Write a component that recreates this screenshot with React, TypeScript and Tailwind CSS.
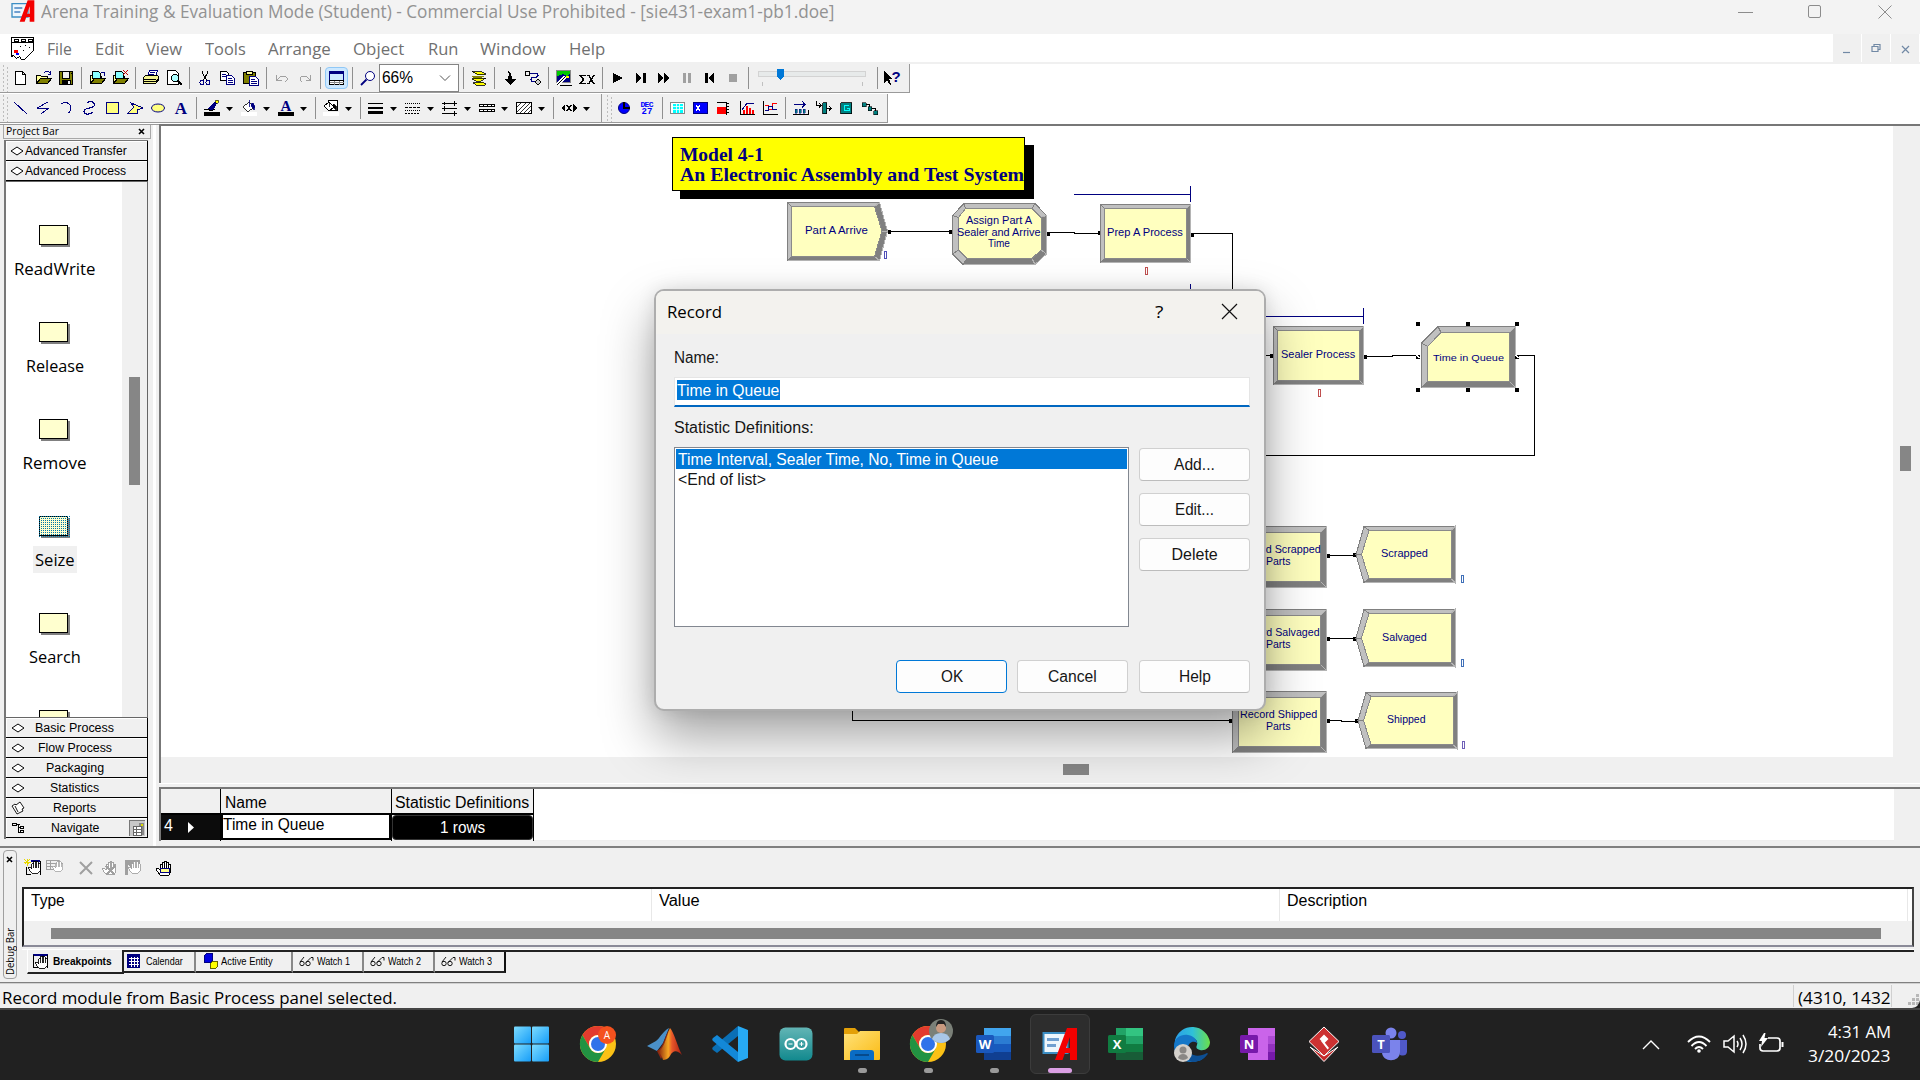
import React, { useLayoutEffect, useRef, useState } from "react";

const UI = "font-['Open_Sans','Noto_Sans',sans-serif]";
const ARIAL = "font-['Liberation_Sans',Arial,sans-serif]";
const TIMES = "font-['Liberation_Serif','Times_New_Roman',serif]";

/** One line of text, condensed or stretched to an exact width. */
function Fit({ w, children, className = "" }: { w: number; children: string; className?: string }) {
  const ref = useRef<HTMLSpanElement>(null);
  const [k, setK] = useState(1);
  useLayoutEffect(() => {
    if (ref.current) setK(w / ref.current.offsetWidth);
  }, [w, children]);
  return (
    <span className={"block shrink-0 " + className} style={{ width: w }}>
      <span ref={ref} className="inline-block origin-left whitespace-pre" style={{ transform: `scaleX(${k})` }}>
        {children}
      </span>
    </span>
  );
}

/* ---------- toolbars ---------- */

const N = "#000080";
const O = "#808000";

function Ic({ children, s = 20 }: { children: React.ReactNode; s?: number }) {
  return (
    <svg width={s} height={s} viewBox={`0 0 ${s} ${s}`} shapeRendering="crispEdges" fill="none" className="shrink-0">
      {children}
    </svg>
  );
}

const folder = (
  <>
    <path d="M3.5 15.5v-8h4l1 1h6v2" fill="#ffff99" stroke="#000" />
    <path d="M3.5 15.500l4-5h11l-4 5z" fill={O} stroke="#000" />
  </>
);

const icons: Record<string, React.ReactNode> = {
  new: <path d="M5.500 3.500h7l3 3v10h-10zM12.500 3.500v3h3" fill="#fff" stroke="#000" />,
  open: <>{folder}<path d="M10.500 5.500l2-2h3l2 2M17.500 2.500v4h-3" stroke={N} /></>,
  save: <><path d="M3.500 3.500h13v13h-13z" fill={O} stroke="#000" /><path d="M6 4h8v6H6z" fill="#efefef" /><path d="M6.500 4v6h7V4M15 5h1" stroke="#000" /><path d="M6 12h9v5H6z" fill="#000" /><path d="M12 13h2v3h-2z" fill="#efefef" /></>,
  import: <>{folder}<path d="M5.500 3.500h6l2 2v5h-8z" fill="#8ff" stroke="#000" /><path d="M14 4.500h3.500v3" stroke={N} /></>,
  unload: <>{folder}<path d="M5.500 3.500h6l2 2v5h-8z" fill="#8ff" stroke="#000" /><path d="M13 2l5 5M18 2l-5 5" stroke="#c00000" /></>,
  print: <><path d="M6.500 8.500l2-6h8l-2 6z" fill="#fff" stroke={N} /><path d="M2.500 9.500l2-2h12l1 1v4l-3 3h-12z" fill="#f4f490" stroke="#000" /><path d="M3 11.500h12M3 13.500h12l3-3" stroke="#000" /><path d="M9 4.500h5M8 6.500h5" stroke={N} /></>,
  preview: <><path d="M3.500 2.500h8l3 3v11h-11z" fill="#fff" stroke="#000" /><circle cx="11" cy="10" r="3.500" fill="#aff" stroke="#000" /><path d="M14 13l4 4" stroke="#000" strokeWidth="2" /></>,
  cut: <><path d="M7.500 3v2l4 7M12.500 3v2l-4 7" stroke="#000" /><circle cx="7" cy="14.500" r="2" stroke={N} /><circle cx="13" cy="14.500" r="2" stroke={N} /></>,
  copy: <><path d="M2.500 3.500h6l2 2v7h-8z" fill="#fff" stroke="#000" /><path d="M8.500 7.500h5l3 3v6h-8z" fill="#fff" stroke={N} /><path d="M4 6.500h4M4 8.500h4M10 10.500h4M10 12.500h5M10 14.500h5" stroke={N} /></>,
  paste: <><path d="M2.500 4.500h12v11h-12z" fill={O} stroke="#000" /><path d="M5.500 3.500h6v3h-6z" fill="#ff9" stroke="#000" /><path d="M8.500 8.500h6l3 3v6h-9z" fill="#fff" stroke={N} /><path d="M10 11.500h4M10 13.500h6M10 15.500h6" stroke={N} /></>,
  undo: <path d="M4.500 7v5h5M5 12l4-4h4l2 2v2l-2 2" stroke="#a0a0a0" />,
  redo: <path d="M15.500 7v5h-5M15 12l-4-4H7l-2 2v2l2 2" stroke="#a0a0a0" />,
  split: <><path d="M2.500 3.500h14v13h-14z" fill="#cfeaff" stroke={N} /><path d="M2 3h15v3H2z" fill={N} /><path d="M2.500 12.500h14v4h-14z" fill="#fff" stroke="#000" /><path d="M7.500 13v4M12.500 13v4M3 14.500h14" stroke="#888" /></>,
  zoom: <g shapeRendering="auto"><circle cx="12" cy="8" r="4.500" stroke={N} fill="#fff" /><path d="M8.500 11.500L3 17" stroke={N} strokeWidth="1.800" /></g>,
  layers: <><path d="M2.500 3.500h9l5 3h-9z" fill="#ff0" stroke="#000" strokeWidth=".8" /><path d="M16.500 7.500l-4 2.500h-8l-2-1.500 5-1z" fill={O} /><path d="M3 11l4-1h10l-5 3H7z" fill="#ff0" stroke="#000" strokeWidth=".8" /><path d="M4 15l3 2h9l1-1-4-2z" fill="#ff0" stroke="#000" strokeWidth=".8" /></>,
  arrow: <path d="M8 3l3 2 1 6h4l-6 6-6-6h4l1-5z" fill="#000" />,
  connect: <><path d="M2.500 3.500h4v4h-4z" stroke="#000" /><path d="M7 5.500h7l1 2-2 2H9l-1 2 1 2h4" stroke={N} /><path d="M15 11l3 3-3 3-3-3z" fill="#ccc" stroke="#000" /></>,
  pic: <><path d="M2.500 2.500h14v12h-14z" fill={N} stroke="#888" /><path d="M3 3h13v3l-3 2-4-2-6 2z" fill="#00c800" /><path d="M3 17l8-8" stroke="#fff" strokeWidth="3" /><path d="M3 17l8-8M6 17.500h12" stroke="#000" /><path d="M12 9h3" stroke="#ff0" strokeWidth="2" /></>,
  sigma: <path d="M9 7.500H3l3.500 4-3.500 4h6M10 7.500h2l4.500 8H18M18 7.500h-1.500l-4.500 8h-2" stroke="#000" strokeWidth="1.500" />,
  play: <path d="M5 5v10l10-5z" fill="#000" />,
  step: <path d="M5 5v10l6-5zM12 5h3v10h-3z" fill="#000" />,
  ff: <path d="M4 5v10l6-5zM10 5v10l6-5z" fill="#000" />,
  pause: <path d="M6 5h3v10H6zM11 5h3v10h-3z" fill="#a0a0a0" />,
  back: <path d="M5 5h3v10H5zM14 5v10l-6-5z" fill="#000" />,
  stop: <path d="M6 6h8v8H6z" fill="#a0a0a0" />,
  line: <path d="M4 4l13 12" stroke={N} />,
  zig: <path d="M15 4L4 10h12l-8 6" stroke={N} />,
  arc: <path d="M5 6c4-3 10-1 10 4 0 2-1 4-3 5" stroke={N} />,
  curve: <path d="M8 5c3-3 9-1 7 3-2 3-9 1-10 5 0 4 6 4 9 1" stroke={N} strokeWidth="1.200" />,
  rect: <path d="M4.500 4.500h12v11h-12z" fill="#ffff80" stroke={N} />,
  poly: <path d="M3 15l6-6-3-4 12 5-6 2v3z" fill="#ffff80" stroke={N} />,
  ellipse: <ellipse cx="10" cy="10" rx="6.500" ry="4" fill="#ffff80" stroke={N} shapeRendering="auto" />,
  letter: <text x="10" y="16" textAnchor="middle" fontSize="17" fontWeight="700" fontFamily="Liberation Serif" fill={N}>A</text>,
  pen: <><path d="M5 12l2-3 8-7 1 2-5 8z" fill={N} /><path d="M14 2l3 1-2 3-2-2z" fill="#ff0" stroke="#000" strokeWidth=".6" /><path d="M2 11.500h4l3 1 4-1" stroke="#000" /><path d="M2 14h16v4H2z" fill="#000" /></>,
  bucket: <><path d="M4 9l6-5 5 5-6 5z" fill="#fff" stroke="#000" strokeWidth=".8" /><path d="M10 2v7M13 5c3 1 3 4 2 7l-3-5z" fill={N} stroke={N} strokeWidth=".8" /><path d="M2 14h16v4H2z" fill="#fff" /></>,
  fontc: <><text x="10" y="13" textAnchor="middle" fontSize="15" fontWeight="700" fontFamily="Liberation Serif" fill={N}>A</text><path d="M2 14h16v4H2z" fill="#000" /></>,
  fillall: <><path d="M7.500 2.500h9v10h-9z" fill="#fff" stroke="#000" /><path d="M3 8l5-4 5 5-5 4z" fill="#fff" stroke="#000" /><path d="M8 4v5M12 6l3 2v4l-3-4z" fill="#000" stroke="#000" strokeWidth=".8" /><path d="M2 14h16v4H2z" fill="#fff" /></>,
  lines: <path d="M2 5h15v1H2zM2 9h15v2H2zM2 13h15v3H2z" fill="#000" />,
  dashes: <><path d="M2 5.500h15M2 12.500h15" stroke="#000" strokeDasharray="1 1" /><path d="M2 9.500h15" stroke="#000" strokeDasharray="3 1" /><path d="M2 15.500h15" stroke="#000" strokeDasharray="2 1" /></>,
  ends: <path d="M2 5.500h15M2 10.500h15M2 15.500h15M14.500 3v5M4.500 8v5M14.500 13v5M4.500 4v3" stroke="#000" />,
  patt: <><path d="M2 6h16v3H2zM2 11h16v3H2z" fill="#000" /><path d="M3 7.500h14M3 12.500h14" stroke="#fff" strokeDasharray="3 1" /></>,
  hatch: <><path d="M2.500 4.500h15v11h-15z" fill="#fff" stroke="#000" /><path d="M3 9l5-5M3 14l9-9M6 15l10-10M10 15l7-7M14 15l3-3" stroke="#000" strokeWidth=".8" /></>,
  arrowx: <><path d="M2 10l4-4v8zM18 10l-4-4v8z" fill="#000" /><path d="M7.500 7l5 6M12.500 7l-5 6" stroke="#000" strokeWidth="1.300" /></>,
  clock: <><circle cx="10" cy="10" r="5.500" fill="#00f" stroke={N} shapeRendering="auto" /><path d="M10 4v6h6" stroke="#000" strokeWidth="1.500" /></>,
  date: <><text x="10" y="9" textAnchor="middle" fontSize="8" textLength="13" fontWeight="700" fontFamily="Liberation Mono" fill="#00f">DEC</text><text x="10" y="16" textAnchor="middle" fontSize="9" fontWeight="700" fontFamily="Liberation Mono" fill="#00f">27</text></>,
  grid: <><path d="M2.500 4.500h14v11h-14z" fill="#fff" stroke="#888" /><path d="M5 6h10v9H5z" fill="#0ff" /><path d="M5 8.500h10M5 11.500h10M8.500 6v9M11.500 6v9" stroke="#fff" strokeWidth=".8" /></>,
  xvar: <><path d="M2.500 4.500h14v11h-14z" fill="#00f" stroke={N} /><path d="M5 7l4 6M9 7l-4 6" stroke="#fff" /></>,
  level: <><path d="M3 9h9v7H3z" fill="#f00" /><path d="M3 4.500h9M12.500 4v13M13 5.500h2M13 8.500h2M13 11.500h2M13 14.500h2" stroke="#000" /></>,
  hist: <><path d="M3.500 3v13.500h14" stroke="#000" /><path d="M6 12h2v4H6zM9 8h2v8H9zM12 10h2v6h-2zM15 12h2v4h-2z" fill="#f00" /><path d="M5 12l5-7h7" stroke={N} /></>,
  plot: <><path d="M3.500 3v13.500h14" stroke="#000" /><path d="M5 7.500h3v4h4v-6h5" stroke="#f00" /><path d="M5 12.500h3v-4h4v3h5" stroke={N} /></>,
  queue: <><path d="M2 16.500h16M17.500 12v4" stroke="#000" /><path d="M4 11h2v4H4zM8 11h2v4H8zM12 11h2v4h-2z" fill="#008080" stroke={N} strokeWidth=".5" /><path d="M3 6.500h11M11 3l3 3.500-3 3" stroke={N} /></>,
  route: <><path d="M8.500 4.500h4v11h-4z" fill="#008080" stroke="#000" strokeWidth=".8" /><path d="M2.500 3v4.500h4M5 5l2 2.500-2 2M13 10.500h5M15 8l2 2.500-2 2" stroke="#000" /></>,
  global: <><path d="M3.500 4.500h11v11h-11z" fill="#008080" stroke="#000" strokeWidth=".8" /><path d="M12 7.500H7.500v5H12v-2h-2" stroke="#0ff" /></>,
  network: <><path d="M2 4.500h4v4H2zM8 8.500h3.500v4H8zM13.500 12.500h4v4h-4z" fill="#008080" stroke="#000" strokeWidth=".6" /><path d="M6 6.500h3v2M12 10.500h3v2" stroke="#000" /></>,
  help: <><path d="M2 3v12l3-3 3 5 1-1-2-5h4z" fill="#000" /><text x="14" y="14" textAnchor="middle" fontSize="15" fontWeight="700" fontFamily="Liberation Sans" fill={N}>?</text></>,
};

const Sep = () => <div className="ml-[4px] mr-[3px] h-[22px] w-px shrink-0 bg-[#8f8f8f]" />;
const Grip = () => (
  <svg width="8" height="28" className="shrink-0" shapeRendering="crispEdges">
    <path d="M3.500 1v26M7.500 3v26" stroke="#bdbdbd" strokeWidth="1.500" strokeDasharray="2 2" />
  </svg>
);
const Tool = ({ name }: { name: string }) => (
  <div className="flex w-[23px] shrink-0 items-center justify-center"><Ic>{icons[name]}</Ic></div>
);
const Drop = ({ name }: { name: string }) => (
  <div className="flex w-[37px] shrink-0 items-center pl-[2px]">
    <Ic>{icons[name]}</Ic>
    <svg width="7" height="4" className="ml-[4px] mt-[2px]"><path d="M0 0h7L3.500 4z" fill="#000" /></svg>
  </div>
);
const Tools = ({ names }: { names: string[] }) => <>{names.map((n) => <Tool key={n} name={n} />)}</>;

function Toolbars() {
  return (
    <div className="h-[62px] border-t-2 border-[#f0f0f0] bg-white">
      <div className="flex h-[29px] w-[910px] items-center border-b border-r border-[#9a9a9a] bg-[#f0f0f0]">
        <Grip />
        <Tools names={["new", "open", "save"]} /><Sep />
        <Tools names={["import", "unload"]} /><Sep />
        <Tools names={["print", "preview"]} /><Sep />
        <Tools names={["cut", "copy", "paste"]} /><Sep />
        <Tools names={["undo", "redo"]} /><Sep />
        <div className="ml-px flex h-[22px] w-[23px] items-center justify-center rounded-sm border border-[#90c8f6] bg-[#cce8ff]"><Ic>{icons.split}</Ic></div>
        <Sep />
        <Tool name="zoom" />
        <div className="flex h-[28px] w-[80px] shrink-0 items-center justify-between border border-[#848484] bg-white pb-px pl-[2px] pr-[7px]">
          <Fit w={31} className={ARIAL + " text-[16px] leading-none"}>66%</Fit>
          <svg width="12" height="8" fill="none" className="mt-px"><path d="M1 1.500l5 5 5-5" stroke="#555" /></svg>
        </div>
        <Sep /><Tool name="layers" /><Sep />
        <Tools names={["arrow", "connect"]} /><Sep />
        <Tools names={["pic", "sigma"]} /><Sep />
        <Tools names={["play", "step", "ff", "pause", "back", "stop"]} /><Sep />
        <svg width="121" height="24" className="shrink-0" shapeRendering="crispEdges">
          <rect x="6.500" y="5.500" width="107" height="5" fill="#e7eaea" stroke="#d3d3d3" />
          <path d="M25 3h7v8l-3.500 3-3.500-3z" fill="#0078d7" />
          <path d="M10.500 16v4M110.500 16v4" stroke="#c0c0c0" />
        </svg>
        <Sep /><div className="-ml-px"><Tool name="help" /></div>
      </div>
      <div className="mt-[1px] flex h-[29px]">
        <div className="flex w-[602px] shrink-0 items-center border-b border-r border-[#9a9a9a] bg-[#f0f0f0]">
          <Grip />
          <Tools names={["line", "zig", "arc", "curve", "rect", "poly", "ellipse", "letter"]} /><Sep />
          <Drop name="pen" /><Drop name="bucket" /><Drop name="fontc" /><Sep />
          <Drop name="fillall" /><Sep />
          <Drop name="lines" /><Drop name="dashes" /><Drop name="ends" /><Drop name="patt" /><Drop name="hatch" /><Sep />
          <Drop name="arrowx" />
        </div>
        <div className="flex w-[286px] items-center border-b border-r border-[#9a9a9a] bg-[#f0f0f0] pl-[2px]">
          <Grip />
          <Tools names={["clock", "date"]} /><Sep />
          <Tools names={["grid", "xvar", "level", "hist", "plot"]} /><Sep />
          <Tools names={["queue", "route", "global", "network"]} />
        </div>
      </div>
    </div>
  );
}

/* ---------- title and menu ---------- */

const AppIcon = ({ s }: { s: number }) => (
  <svg width={s} height={s} viewBox="0 0 36 36">
    <path d="M1.500 7h24v20h-24z" fill="#eef6fc" stroke="#3c8ec4" strokeWidth="2" />
    <path d="M5 12h12v3H5zM5 18h9v3H5z" fill="#6f9fd0" />
    <path d="M25 2h10v32h-7v-7h-5l-2.500 7H13zM28 11l-4 11h4z" fill="#f40000" fillRule="evenodd" />
  </svg>
);

const menus: [string, number][] = [["File", 25], ["Edit", 29], ["View", 36], ["Tools", 40.5], ["Arrange", 62.5], ["Object", 51.5], ["Run", 30], ["Window", 65.500], ["Help", 36.5]];

function Header() {
  return (
    <>
      <div className="flex h-[34px] shrink-0 bg-[#f3f3f3]">
        <div className="ml-[11px] mt-[-1px]"><AppIcon s={24} /></div>
        <Fit w={793} className={UI + " ml-[6px] text-[17.500px] leading-[23px] text-[#929292]"}>
          Arena Training & Evaluation Mode (Student) - Commercial Use Prohibited - [sie431-exam1-pb1.doe]
        </Fit>
        <svg width="182" height="24" className="ml-auto" fill="none" stroke="#8c8c8c">
          <path d="M0 12.500h15" />
          <rect x="70.500" y="5.500" width="12" height="12" rx="1.500" />
          <path d="M140.500 5.500l13 13M153.500 5.500l-13 13" />
        </svg>
      </div>
      <div className="flex h-[28px] shrink-0 items-center bg-white">
        <svg width="24" height="24" viewBox="0 0 24 24" className="ml-[11px]" shapeRendering="crispEdges" fill="none" stroke="#000">
          <path d="M.5 1.500h22v13l-9 9h-3l-2-3-3 2-3-3-2 1z" fill="#fff" />
          <path d="M1 6.500h21M3 3.500h4v2H3zM10 3.500h4v2h-4zM17 3.500h4v2h-4z" />
          <path d="M3 14h4v3H3z" fill="#f00" stroke="none" /><path d="M5 17h3v2H5z" fill="#00f" stroke="none" />
          <path d="M9 10h2M14 9h2M18 11h2M12 14h2" strokeDasharray="1 1" />
        </svg>
        <div className={UI + " ml-[12px] flex gap-[22.700px] pt-[2px] text-[17px] leading-[24px] text-[#707070]"}>
          {menus.map(([t, w]) => <Fit key={t} w={w}>{t}</Fit>)}
        </div>
        <div className="ml-auto flex h-full gap-px pr-px">
          {["M10 18.500h7", "M10 12.500h6v5h-6zM12 12.500v-2h6v5h-2", "M11 12l7 7M18 12l-7 7"].map((d) => (
            <svg key={d} width="28" height="28" className="bg-[#f0f0f0]" fill="none"><path d={d} stroke="#7189a5" strokeWidth="1.200" /></svg>
          ))}
        </div>
      </div>
    </>
  );
}

/* ---------- project bar ---------- */

const Diamond = () => (
  <svg width="14" height="10" fill="none" className="shrink-0"><path d="M1 5l6-4 6 4-6 4z" fill="#fff" stroke="#000" /></svg>
);

const modules: [string, number][] = [["ReadWrite", 81], ["Release", 58], ["Remove", 64], ["Seize", 40], ["Search", 52], ["", 0]];

function ModuleGlyph({ selected }: { selected: boolean }) {
  return (
    <svg width="32" height="23" shapeRendering="crispEdges">
      <defs>
        <pattern id="sel" width="2" height="2" patternUnits="userSpaceOnUse"><rect width="1" height="1" fill="#0078a7" /></pattern>
      </defs>
      <rect x="2" y="2" width="29" height="20" fill="#808080" />
      <rect x=".5" y=".5" width="28" height="19" fill="#ffffcf" stroke="#000" />
      {selected && <rect width="31" height="22" fill="url(#sel)" />}
    </svg>
  );
}

const panelRow = "flex h-[20px] shrink-0 items-center border-b border-r border-black bg-[#f0f0f0] shadow-[inset_1px_1px_0_#fff]";

function ProjectBar() {
  return (
    <div className="flex w-[159px] shrink-0 border-t border-[#9a9a9a] bg-[#f0f0f0]">
      <div className="ml-[3px] w-[148px] shrink-0">
        <div className="flex h-[14px] items-center justify-between border border-t-0 border-[#a8a8a8] pl-[2px] pr-[5px]">
          <Fit w={53} className={UI + " mt-[-2px] text-[11.500px] leading-[13px]"}>Project Bar</Fit>
          <svg width="7" height="7"><path d="M1 1l5 5M6 1L1 6" stroke="#000" strokeWidth="1.600" /></svg>
        </div>
        <div className={ARIAL + " mt-[1px] ml-[1px] flex h-[699px] w-[144px] flex-col border-l-2 border-t border-[#777] text-[12px] leading-[14px]"}>
          {[["Advanced Transfer", 102], ["Advanced Process", 101]].map(([t, w]) => (
            <div key={t} className={panelRow + " pl-[4px]"}><Diamond /><Fit w={w as number} className="ml-px">{t as string}</Fit></div>
          ))}
          <div className="flex h-[537px] shrink-0 overflow-hidden border-b border-r border-t border-[#666] bg-white">
            <div className={UI + " flex w-[116px] flex-col overflow-hidden pt-[43px] text-[17px]"}>
              {modules.map(([t, w]) => (
                <div key={t} className="flex h-[97px] shrink-0 flex-col items-center pr-[19px]">
                  <div className="pl-px"><ModuleGlyph selected={t === "Seize"} /></div>
                  <div className={"mt-[7px] flex h-[27px] items-center px-[2px] leading-[27px] " + (t === "Seize" ? "bg-[#f0f0f0]" : "")}>
                    {t && <Fit w={w}>{t}</Fit>}
                  </div>
                </div>
              ))}
            </div>
            <div className="flex-1 bg-[#f0f0f0] pl-[7px] pt-[195px]"><div className="h-[108px] w-[11px] bg-[#868686]" /></div>
          </div>
          {[["Basic Process", 79], ["Flow Process", 74], ["Packaging", 58], ["Statistics", 49], ["Reports", 43], ["Navigate", 48]].map(([t, w]) => (
            <div key={t} className={panelRow + " relative pl-[5px]"}>
              {t === "Reports" ? (
                <svg width="14" height="14" fill="#fff" stroke="#000"><path d="M1 5l3-2 1 1 4-3 4 6-2 1 1 2-6 3zM4 5l3 6" strokeWidth=".9" /></svg>
              ) : t === "Navigate" ? (
                <svg width="14" height="12" fill="none" stroke="#000" shapeRendering="crispEdges"><path d="M1.500 1.500h4v2h-4zM5 2.500h4M7.500 2v8M7 5.500h2M7 10h2M9.500 4.500h3v2h-3zM9.500 8.500h3v2h-3z" /></svg>
              ) : <Diamond />}
              <div className="flex flex-1 justify-center pr-[23px]"><Fit w={w as number}>{t as string}</Fit></div>
              {t === "Navigate" && (
                <svg width="16" height="16" className="absolute right-[2px] top-[2px]" shapeRendering="crispEdges">
                  <path d="M0 0h16v16H0z" fill="#c8c8c8" /><path d="M0 16V0h16" fill="none" stroke="#777" strokeWidth="2" />
                  <path d="M4 6h8v9H4z" fill="#fff" stroke="#666" /><path d="M4 9h8M4 12h8M7 6v9" stroke="#666" /><path d="M10 3h5v12h-2V6h-3z" fill="#888" /><path d="M12 4h2v2h-2z" fill="#dd0" />
                </svg>
              )}
            </div>
          ))}
        </div>
      </div>
      <div className="ml-[2px] w-[3px] bg-white" />
    </div>
  );
}

/* ---------- model canvas ---------- */

type P = [number, number];

/** Bevelled module shape: points run clockwise. */
function Bevel({ outer, inner }: { outer: P[]; inner: P[] }) {
  return (
    <g shapeRendering="crispEdges">
      {outer.map((a, i) => {
        const j = (i + 1) % outer.length;
        const b = outer[j];
        const dark = b[1] - a[1] - (b[0] - a[0]) > 0.5;
        const pts = [a, b, inner[j], inner[i]].map((p) => p.join(",")).join(" ");
        return <polygon key={i} points={pts} fill={dark ? "#808080" : "#c0c0c0"} stroke={dark ? "#b4b4b4" : "#808080"} />;
      })}
      <polygon points={inner.map((p) => p.join(",")).join(" ")} fill="#ffffbf" stroke="#8a8a8a" />
    </g>
  );
}
const box = (x0: number, y0: number, x1: number, y1: number): P[] => [[x0, y0], [x1, y0], [x1, y1], [x0, y1]];
const dispose = (x: number, y: number, h: number) => ({
  outer: [[x + 8, y], [x + 99, y], [x + 99, y + h], [x + 8, y + h], [x, y + h / 2]] as P[],
  inner: [[x + 13, y + 4], [x + 95, y + 4], [x + 95, y + h - 4], [x + 13, y + h - 4], [x + 5.5, y + h / 2]] as P[],
});

const shapes: { outer: P[]; inner: P[] }[] = [
  { outer: [[787.5, 202.5], [879.5, 202.5], [887.5, 231], [879.5, 260.5], [787.5, 260.5]], inner: [[791.5, 206.5], [874.5, 206.5], [882, 231], [874.5, 256.5], [791.5, 256.5]] },
  {
    outer: [[964, 203.5], [1035, 203.5], [1046.5, 215.5], [1046.5, 254], [1035, 264.5], [963, 264.5], [952.5, 254], [952.5, 215.5]],
    inner: [[965.5, 208.5], [1032, 208.5], [1041, 217.500], [1041, 250], [1032, 258.5], [967, 258.5], [958.5, 250], [958.5, 217.5]],
  },
  { outer: box(1100.5, 204.5, 1190.5, 262.5), inner: box(1104.5, 208.5, 1186.5, 258.5) },
  { outer: box(1273.5, 326.5, 1363.5, 384.5), inner: box(1277.5, 330.5, 1359.5, 380.5) },
  { outer: [[1438, 326.5], [1515.5, 326.5], [1515.5, 387.5], [1421.5, 387.5], [1421.5, 343]], inner: [[1441, 332.5], [1509.5, 332.5], [1509.5, 381.5], [1427.5, 381.5], [1427.5, 346.5]] },
  ...[526.5, 609.5, 691.5].map((y) => ({ outer: box(1232.5, y, 1326.5, y + 61), inner: box(1238.5, y + 6, 1320.5, y + 55) })),
  dispose(1356, 526.5, 56), dispose(1356, 609.5, 57), dispose(1358, 692.5, 56),
];

const labels: [string, number, number, number][] = [
  ["Part A Arrive", 836.5, 230, 63],
  ["Assign Part A", 998.5, 220, 66], ["Sealer and Arrive", 998.5, 232, 84], ["Time", 998.5, 243, 22],
  ["Prep A Process", 1145, 232, 76], ["Sealer Process", 1318, 354, 74], ["Time in Queue", 1468.5, 357.5, 71],
  ["Record Scrapped", 1278.5, 549, 84], ["Parts", 1278.5, 561, 25], ["Record Salvaged", 1278.5, 632, 82], ["Parts", 1278.5, 644, 25],
  ["Record Shipped", 1278.5, 714, 77], ["Parts", 1278.5, 726, 25],
  ["Scrapped", 1404.5, 553, 47], ["Salvaged", 1404.5, 637, 45], ["Shipped", 1406.5, 719, 39],
];
const counters: [number, number, string][] = [
  [885.5, 255, "#5050b8"], [1146.5, 271, "#c05050"], [1319.5, 393, "#c05050"], [1462.5, 579, "#4070b8"], [1462.5, 663, "#4070b8"], [1463.5, 745, "#7060b8"],
];
const dots: P[] = [[889, 231], [950, 231], [1048, 233], [1099, 232], [1192, 234], [1271, 355], [1365, 356], [1328, 555.5], [1354, 554.5], [1328, 638.5], [1354, 638.5], [1328, 720.5], [1356, 720.5], [1230, 720]];
const handles: P[] = [[1418, 324], [1468, 324], [1517, 324], [1418, 390], [1468, 390], [1517, 390], [1418, 357], [1517, 357]];

function Canvas() {
  return (
    <div className="relative h-[631px] w-[1732px] overflow-hidden bg-white">
      <svg viewBox="161 126 1732 631" width="1732" height="631" className="block" fill="none">
        <g shapeRendering="crispEdges">
          <rect x="680" y="145" width="354" height="54" fill="#000" />
          <rect x="672.5" y="137.5" width="352" height="53" fill="#ff0" stroke="#000" />
          <path d="M1074 194.500h116M1190.500 186v16M1190.500 284v16M1220 316.500h143M1363.500 308v16" stroke={N} />
          <path d="M888 231.500h64M1047 232.500h27v1h26M1191 233.500h41.500v100M1240 355.500h33M1364 356.500h28v-1h28M1518 355.500h16.500v100h-300M852.500 600v120.500h380M1327 555.500h29M1327 638.500h29M1327 720.500h14v1h17" stroke="#000" />
          {dots.map(([x, y], i) => <rect key={i} x={x - 1.5} y={y - 1.5} width="3" height="4" fill="#000" />)}
        </g>
        {shapes.map((s, i) => <Bevel key={i} {...s} />)}
        <g shapeRendering="crispEdges">
          {handles.map(([x, y], i) => <rect key={i} x={x - 2} y={y - 2} width="4" height="4" fill="#000" />)}
          <path d="M1416 355l4 3M1515 355l4 3" stroke="#fff" />
          {counters.map(([x, y, c], i) => <rect key={i} x={x - 1} y={y - 3.5} width="2" height="7" stroke={c} />)}
        </g>
      </svg>
      <div className={TIMES + " absolute left-[519px] top-[19px] text-[19px] font-bold leading-[20px] text-[#000080]"}>
        <Fit w={84}>Model 4-1</Fit>
        <Fit w={344.5}>An Electronic Assembly and Test System</Fit>
      </div>
      {labels.map(([t, x, y, w], i) => (
        <div
          key={i}
          className={ARIAL + " absolute leading-[12px] text-[#000080] " + (t === "Time in Queue" ? "text-[9.500px]" : "text-[10.500px]")}
          style={{ left: x - w / 2 - 161, top: y - 6 - 126 }}
        >
          <Fit w={w}>{t}</Fit>
        </div>
      ))}
    </div>
  );
}

function Workspace() {
  return (
    <div className="flex-1">
      <div className="h-[659px] border-l-2 border-t-2 border-[#777] bg-[#f0f0f0]">
        <div className="flex">
          <Canvas />
          <div className="flex-1 pl-[7px] pt-[320px]"><div className="h-[25px] w-[11px] bg-[#868686]" /></div>
        </div>
        <div className="pl-[902px] pt-[7px]"><div className="h-[11px] w-[26px] bg-[#868686]" /></div>
      </div>
      <div className="h-[4px] border-t border-white bg-[#f0f0f0]" />
      <div className={ARIAL + " flex h-[54px] border-l-2 border-t-2 border-[#777] bg-[#f0f0f0] text-[16px] leading-[18px]"}>
        <div className="w-[59px] shrink-0">
          <div className="h-[26px] border-b-2 border-black bg-[#f0f0f0]" />
          <div className="flex h-[25px] items-start bg-[#0c0c0c] pl-[3px] pt-[2px] text-white">
            <span>4</span>
            <svg width="7" height="11" className="ml-[15px] mt-[5px]"><path d="M0 0v11l6-5.500z" fill="#fff" /></svg>
          </div>
        </div>
        <div className="w-[171px] shrink-0 border-l border-black">
          <div className="flex h-[26px] items-center border-b-2 border-black pl-[4px] pt-[3px]"><Fit w={42}>Name</Fit></div>
          <div className="h-[25px] border-b-2 border-l-2 border-r-2 border-black bg-white pt-px"><Fit w={101}>Time in Queue</Fit></div>
        </div>
        <div className="w-[143px] shrink-0 border-l border-r border-black">
          <div className="flex h-[26px] items-center border-b-2 border-black pl-[3px] pt-[3px]"><Fit w={134}>Statistic Definitions</Fit></div>
          <div className="flex h-[25px] justify-center rounded-sm border border-[#333] bg-black pt-[3px] text-white"><Fit w={45}>1 rows</Fit></div>
        </div>
        <div className="flex-1 border-b border-[#eee] bg-white" />
        <div className="w-[26px] bg-[#f0f0f0]" />
      </div>
    </div>
  );
}

/* ---------- debug bar ---------- */

/** Raised hand with four separate fingers and a thumb. */
const Hand = ({ c, x = 0, s = 1 }: { c: string; x?: number; s?: number }) => (
  <g transform={`translate(${x} 0) scale(${s})`} fill="none" stroke={c} strokeWidth="1">
    <path d="M5.500 16.500L1.500 11V9.500h2l2 2V5.500h2v-2h2v-1h2v1h2v2h2v8l-2 3z" fill="#fff" />
    <path d="M7.500 5v5M9.500 3v7M11.500 3v7M13.500 5v5" />
  </g>
);
const Glasses = () => (
  <svg width="15" height="11" fill="none" stroke="#000" strokeWidth=".9"><circle cx="3" cy="7.500" r="2.200" /><circle cx="9" cy="7.500" r="2.200" /><path d="M1 6l4-5M7 6.500l5-5h2v3" /></svg>
);
const G = "#a0a0a0";

function DebugBar() {
  const cols = ["Type", "Value", "Description"];
  const tab = "flex items-center border-b-2 border-r-2 border-[#222] bg-[#f0f0f0] text-[11px]";
  return (
    <div className="flex h-[137px] shrink-0 border-b border-t-2 border-[#808080] bg-[#f0f0f0]">
      <div className="relative ml-[3px] mt-[2px] h-[129px] w-[14px] shrink-0 rounded-sm border border-[#a0a0a0]">
        <svg width="7" height="7" className="ml-[2px] mt-[5px]"><path d="M1 1l5 5M6 1L1 6" stroke="#000" strokeWidth="1.600" /></svg>
        <div className={UI + " absolute left-[-1px] top-[124px] origin-top-left -rotate-90 text-[11px] leading-[14px]"}><Fit w={47}>Debug Bar</Fit></div>
      </div>
      <div className="ml-[5px] w-[1892px]">
        <div className="flex h-[39px] items-center pl-[2px]" >
          <Ic s={18}><path d="M7 1h9v2H7z" fill={N} /><path d="M16.500 2v14M2.500 8v7h4" stroke="#000" /><Hand c="#000" x={3} s={0.85} /><path d="M0 0l5 5M6 0L1 5M3.500 0v7M0 3.500h7" stroke="#e8d800" /></Ic>
          <div className="ml-[4px]"><Ic s={18}><path d="M.5 1.500h12v9H.5zM1 4.500h11M1 7.500h11M4.500 1v10" stroke={G} /><Hand c={G} x={5} s={0.75} /></Ic></div>
          <svg width="14" height="14" className="ml-[15px]"><path d="M1 1l12 12M13 1L1 13" stroke={G} strokeWidth="2" /></svg>
          <div className="ml-[8px]"><Ic s={18}><Hand c={G} s={0.95} /><path d="M5 7l9 9M14 7l-9 9" stroke={G} strokeWidth="1.500" /></Ic></div>
          <div className="ml-[5px]"><Ic s={18}><path d="M1 1h15v4H1zM1 1h3v15H1z" fill={G} /><path d="M3 3l6 6" stroke={G} strokeWidth="2" /><Hand c={G} x={3} s={0.85} /></Ic></div>
          <div className="ml-[13px]"><Ic s={18}><Hand c="#000" /><path d="M5.500 9.500h9v4h-9z" fill="#ff8" stroke={N} /></Ic></div>
        </div>
        <div className={ARIAL + " h-[60px] border-2 border-[#222] border-b-[#8a8a98] border-r-[#444] bg-[#f0f0f0] text-[16px]"}>
          <div className="flex h-[32px] bg-white">
            {cols.map((c) => (
              <div key={c} className="flex w-[628px] items-start border-r border-[#e8e8e8] pl-[7px] pt-[3px] leading-[18px]"><Fit w={c === "Type" ? 34 : c === "Value" ? 41 : 80}>{c}</Fit></div>
            ))}
          </div>
          <div className="ml-[27px] mt-[7px] h-[11px] w-[1830px] bg-[#868686]" />
        </div>
        <div className={ARIAL + " mt-[2px] flex items-start border-t border-white"}>
          <div className={tab + " ml-[5px] h-[24px] w-[97px] border-l border-l-white pl-[5px] pt-px font-bold"}>
            <Ic s={16}><path d="M0 0h15v2H0z" fill={N} /><path d="M.5 1v12h4M14.500 1v13" stroke="#000" /><Hand c="#000" x={1} s={0.85} /></Ic>
            <Fit w={59} className="ml-[4px]">Breakpoints</Fit>
          </div>
          <div className="flex flex-1 border-t-2 border-[#222]">
            <div className={tab + " h-[21px] w-[72px] border-r-[#888] pb-px pl-[3px]"}>
              <svg width="14" height="15" shapeRendering="crispEdges"><path d="M0 0h13v14H0z" fill={N} /><path d="M2 4.500h10M2 7.500h10M2 10.500h10M4.500 3v10M7.500 3v10M10.500 3v10" stroke="#fff" /></svg>
              <Fit w={37} className="ml-[5px]">Calendar</Fit>
            </div>
            <div className={tab + " h-[21px] w-[97px] border-r-[#888] pb-px pl-[8px]"}>
              <svg width="14" height="17" shapeRendering="crispEdges"><path d="M.5 2.500l2-2h6v7l-2 2h-6z" fill="#0000e0" stroke={N} /><path d="M6.500 10.500l2-2h5v5l-2 2h-5z" fill="#ff0" stroke="#660" /></svg>
              <Fit w={52} className="ml-[3px]">Active Entity</Fit>
            </div>
            {["Watch 1", "Watch 2", "Watch 3"].map((t) => (
              <div key={t} className={tab + " h-[21px] w-[71px] pb-px pl-[6px] " + (t === "Watch 3" ? "border-r-[#111]" : "border-r-[#888]")}>
                <Glasses /><Fit w={33} className="ml-[3px]">{t}</Fit>
              </div>
            ))}
          </div>
        </div>
      </div>
    </div>
  );
}

function StatusBar() {
  return (
    <div className={UI + " flex h-[25px] shrink-0 items-center border-t border-[#d0d0d0] bg-[#f0f0f0] text-[17px] leading-[24px]"}>
      <Fit w={395} className="ml-[2px] mt-[3px]">Record module from Basic Process panel selected.</Fit>
      <div className="ml-auto flex h-[22px] w-[99px] items-center border-x border-[#d0d0d0] pl-[4px] pt-[3px]"><Fit w={93}>(4310, 1432</Fit></div>
      <svg width="28" height="24" fill="#b8b8b8"><path d="M24 10h3v3h-3zM20 14h3v3h-3zM24 14h3v3h-3zM16 18h3v3h-3zM20 18h3v3h-3zM24 18h3v3h-3z" /><path d="M20 24q7-1 8-8v8z" fill="#222" /></svg>
    </div>
  );
}

/* ---------- record dialog ---------- */

function Btn({ label, w, primary }: { label: string; w: number; primary?: boolean }) {
  return (
    <button className={"flex h-[33px] w-[111px] items-center justify-center rounded-[4px] border bg-[#fdfdfd] " + (primary ? "border-[#0078d7]" : "border-[#d0d0d0] border-b-[#bcbcbc]")}>
      <Fit w={w}>{label}</Fit>
    </button>
  );
}

function RecordDialog() {
  return (
    <div className="absolute left-[654px] top-[289px] h-[422px] w-[612px] rounded-[10px] border-2 border-[#adadad] bg-[#f0f0f0] shadow-[0_26px_52px_rgba(0,0,0,0.36),0_0_18px_rgba(0,0,0,0.10)]">
      <div className="flex h-[43px] items-center rounded-t-[8px] bg-[#f3f2ee] pb-[2px] pl-[11px]">
        <Fit w={55} className={UI + " text-[16.500px] leading-[24px]"}>Record</Fit>
        <Fit w={8} className={UI + " ml-[433px] text-[17px] leading-[24px]"}>?</Fit>
        <svg width="17" height="17" className="ml-[58px]"><path d="M1 1l15 15M16 1L1 16" stroke="#111" strokeWidth="1.200" /></svg>
      </div>
      <div className={ARIAL + " pl-[18px] pt-[14px] text-[16px] leading-[20px] text-[#161616]"}>
        <Fit w={45}>Name:</Fit>
        <div className="mt-[9px] flex h-[30px] w-[576px] border border-b-2 border-[#e5e5e5] border-b-[#0067c0] bg-white pl-[2px] pt-[2px]">
          <div className="h-[20px] bg-[#0078d7] pr-px leading-[21px] text-white"><Fit w={102}>Time in Queue</Fit></div>
        </div>
        <Fit w={140} className="mt-[11px]">Statistic Definitions:</Fit>
        <div className="mt-[9px] flex w-[576px] justify-between">
          <div className="h-[180px] w-[455px] border border-[#828790] bg-white p-px">
            <div className="h-[20px] bg-[#0078d7] pl-[2px] leading-[22px] text-white"><Fit w={320}>Time Interval, Sealer Time, No, Time in Queue</Fit></div>
            <Fit w={88} className="ml-[2px] leading-[22px]">{"<End of list>"}</Fit>
          </div>
          <div className="flex flex-col gap-[12px] pt-px"><Btn label="Add..." w={41} /><Btn label="Edit..." w={39} /><Btn label="Delete" w={46} /></div>
        </div>
        <div className="mt-[33px] flex w-[576px] justify-end gap-[11px]">
          <div className="-mr-px"><Btn label="OK" w={22} primary /></div>
          <Btn label="Cancel" w={49} />
          <Btn label="Help" w={32} />
        </div>
      </div>
    </div>
  );
}

/* ---------- taskbar ---------- */

const Chrome = ({ children }: { children: React.ReactNode }) => (
  <>
    <circle cx="18" cy="18" r="18" fill="#fbc116" />
    <path d="M2.400 9A18 18 0 0 1 33.600 9H18a9 9 0 0 0-7.800 13.500z" fill="#e33b2e" />
    <path d="M2.400 9A18 18 0 0 0 18 36l7.800-13.500a9 9 0 0 1-15.600 0z" fill="#229342" />
    <circle cx="18" cy="18" r="9" fill="#fff" /><circle cx="18" cy="18" r="7" fill="#2f73ea" />
    {children}
  </>
);
const Office = ({ l, c, bg }: { l: string; c: string[]; bg: string }) => (
  <>
    {c.map((f, i) => <rect key={i} x="8" y={2 + i * 8} width="27" height="8" fill={f} />)}
    <rect y="9" width="18" height="18" rx="1.500" fill={bg} />
    <text x="9" y="22.500" textAnchor="middle" fontSize="13" fontWeight="700" fontFamily="Open Sans" fill="#fff">{l}</text>
  </>
);

const apps: { id: string; art: React.ReactNode; run?: boolean }[] = [
  { id: "start", art: <g fill="url(#win)"><rect x="0" y=".5" width="17" height="17" rx="1" /><rect x="18" y=".5" width="17" height="17" rx="1" /><rect x="0" y="18.500" width="17" height="17" rx="1" /><rect x="18" y="18.500" width="17" height="17" rx="1" /></g> },
  { id: "chrome", art: <Chrome><circle cx="27" cy="9" r="9" fill="#f4511e" /><text x="27" y="12.500" textAnchor="middle" fontSize="10" fontFamily="Open Sans" fill="#fff">A</text></Chrome> },
  { id: "matlab", art: <><path d="M1 20l9-5c4-3 7-10 13-13l-6 15-6 8z" fill="#4a90c8" /><path d="M11 25c7-4 7-14 13-23l-5 24-4 7z" fill="#8c2a14" /><path d="M24 2c4 4 8 20 12 27-5-5-9-5-12 1-2 3-5 4-7 4-1-4-3-7-6-9 7 0 9-14 13-23z" fill="url(#mat)" /></> },
  { id: "code", art: <><path d="M26 0v10L5 27l-4-3c-1-1-1-2 0-3z" fill="#0a6fb5" /><path d="M26 36V26L5 9l-4 3c-1 1-1 2 0 3z" fill="#1388d8" /><path d="M26 0l10 4v28l-10 4z" fill="#27a9f3" /></> },
  { id: "arduino", art: <><rect x="1.500" y="1.500" width="33" height="33" rx="6" fill="url(#ard)" /><circle cx="12.500" cy="18" r="5" fill="none" stroke="#fff" strokeWidth="2.200" /><circle cx="23.500" cy="18" r="5" fill="none" stroke="#fff" strokeWidth="2.200" /><path d="M10.500 18h4M21.500 18h4M23.500 16v4" stroke="#fff" /></> },
  { id: "files", run: true, art: <><path d="M0 3q0-1 1-1h10l4 4h20v8H0z" fill="#e3a008" /><path d="M0 8h13l3-3h20v28q0 1-1 1H0z" fill="url(#fol)" /><path d="M6 34V27q0-3 3-3h18q3 0 3 3v7z" fill="#0a6cc4" /><path d="M11 29h14" stroke="#064a8c" strokeWidth="2" /></> },
  { id: "chrome2", run: true, art: <Chrome><circle cx="31" cy="5" r="12" fill="#7a8078" /><circle cx="31" cy="2" r="5" fill="#c99a80" /><path d="M26 1q0-7 5-7t5 7l-2-3h-6z" fill="#222" /><path d="M22 13q2-6 9-6t9 6q-4 4-9 4t-9-4z" fill="#a9c7e8" /></Chrome> },
  { id: "word", run: true, art: <Office l="W" bg="#1a58bd" c={["#41a5ee", "#2b7cd3", "#185abd", "#103f91"]} /> },
  { id: "arena", art: <AppIcon s={36} /> },
  { id: "excel", art: <><Office l="X" bg="#107c41" c={["#21a366", "#1f9a5c", "#107c41", "#185c37"]} /><path d="M18 2h17v8H18z" fill="#33c481" /><path d="M18 10h17v8H18z" fill="#21a366" /></> },
  { id: "edge", art: <><path d="M1 14A18 18 0 0 1 36 16c0 6-5 9-10 8-4-1-4-3-3-5 2-5-5-9-11-8-5 1-9 3-11 7z" fill="url(#edg)" /><path d="M0 20C0 11 8 8 14 9c6 1 9 5 9 8-4-3-9 0-9 5 0 6 8 11 18 7-3 5-9 7-14 7C8 36 0 30 0 20z" fill="#1577c8" /><path d="M13 20c0 8 9 13 20 7 1 0 1 1 0 2-4 5-9 7-15 7-8-3-9-11-5-16z" fill="#0d4f94" /><circle cx="9" cy="27" r="9" fill="#d4d0cb" /><circle cx="9" cy="24" r="3.500" fill="#8a8784" /><path d="M4 32q1-4 5-4t5 4q-5 4-10 0z" fill="#8a8784" /></> },
  { id: "onenote", art: <><Office l="N" bg="#7719aa" c={["#ca64ea", "#ca64ea", "#ca64ea", "#ca64ea"]} /><path d="M28 10h7v8h-7z" fill="#ae4bd5" /><path d="M28 18h7v8h-7z" fill="#9332bf" /><path d="M28 26h7v8h-7z" fill="#7719aa" /></> },
  { id: "vp", art: <><path d="M18 35.500L4 21l14 9 14-9z" fill="#c52828" stroke="#fff" /><path d="M18 1l15 14.500-15 14.500L3 15.500z" fill="#cc3232" stroke="#fff" /><path d="M18 8.500l4.500 4.500-4.500 4.500-4.500-4.500zM15 15h2.500l5.500 7-1.500 1.500z" fill="#fff" /></> },
  { id: "teams", art: <><circle cx="30" cy="9" r="4" fill="#5059c9" /><path d="M26 14h9v12q-1 5-7 3z" fill="#5059c9" /><circle cx="19" cy="7" r="5.500" fill="#7b83eb" /><path d="M10 14h18v12c0 11-18 11-18 0z" fill="#7b83eb" /><rect y="9" width="18" height="18" rx="1.500" fill="#4b53bc" /><text x="9" y="22.500" textAnchor="middle" fontSize="13" fontWeight="700" fontFamily="Open Sans" fill="#fff">T</text></> },
];

function Taskbar() {
  return (
    <div className="flex h-[72px] shrink-0 border-t-2 border-[#454545] bg-[#212121]">
      <svg width="0" height="0" className="absolute">
        <defs>
          <linearGradient id="win" x2="1" y2="1"><stop stopColor="#7ddcff" /><stop offset="1" stopColor="#169df8" /></linearGradient>
          <linearGradient id="mat"><stop stopColor="#7a1408" /><stop offset=".45" stopColor="#f5a623" /><stop offset=".6" stopColor="#e8582a" /><stop offset="1" stopColor="#a81c10" /></linearGradient>
          <linearGradient id="ard" x2="0" y2="1"><stop stopColor="#62b5b5" /><stop offset="1" stopColor="#12898e" /></linearGradient>
          <linearGradient id="fol" x2="1" y2="1"><stop stopColor="#ffe27a" /><stop offset="1" stopColor="#fbbb14" /></linearGradient>
          <linearGradient id="edg"><stop stopColor="#2a9fe8" /><stop offset=".5" stopColor="#2fc0d8" /><stop offset="1" stopColor="#6be04a" /></linearGradient>
        </defs>
      </svg>
      <div className="ml-[502px] flex gap-[6px] pt-[4px]">
        {apps.map((a) => (
          <div key={a.id} className={"flex h-[60px] w-[60px] flex-col items-center rounded-[6px] pt-[11px] " + (a.id === "arena" ? "border border-[#3c3c3c] bg-[#2d2d2d]" : "border border-transparent")}>
            <svg width="36" height="36" viewBox="0 0 36 36" className="overflow-visible">{a.art}</svg>
            {a.run && <div className="mt-[6px] h-[5px] w-[9px] rounded-full bg-[#9a9a9a]" />}
            {a.id === "arena" && <div className="mt-[6px] h-[5px] w-[24px] rounded-full bg-[#dba0e4]" />}
          </div>
        ))}
      </div>
      <div className="ml-auto flex items-center pb-[2px] pr-[29px]">
        <svg width="18" height="10" fill="none" className="mt-[1px]"><path d="M1 9l8-8 8 8" stroke="#fff" strokeWidth="1.400" /></svg>
        <svg width="26" height="20" viewBox="0 0 26 20" fill="none" stroke="#fff" strokeWidth="1.900" className="ml-[26px]"><path d="M2 8q11-11 22 0M5.500 12q7.500-8 15 0M9 15q4-4 8 0" /><circle cx="13" cy="17" r="1.800" fill="#fff" stroke="none" /></svg>
        <svg width="26" height="22" viewBox="0 0 26 22" fill="none" stroke="#fff" strokeWidth="1.500" className="ml-[10px]"><path d="M2 8h4l6-5v16l-6-5H2zM15 8q2 3 0 6M18 5q4 6 0 12M21 2q6 9 0 18" /></svg>
        <svg width="26" height="22" viewBox="0 0 26 22" fill="none" stroke="#fff" strokeWidth="1.700" className="ml-[10px]"><path d="M10 5h9q3 0 3 3v7q0 3-3 3H5q-3 0-3-3v-4" /><path d="M24.500 9v5" strokeWidth="2" /><path d="M6 0L1 8h3l-1 6 7-9H6.500l1-5z" fill="#fff" stroke="none" /></svg>
        <div className={UI + " ml-[20px] flex w-[87px] flex-col items-end text-[17px] leading-[24px] text-white"}>
          <Fit w={63}>4:31 AM</Fit>
          <Fit w={83}>3/20/2023</Fit>
        </div>
      </div>
    </div>
  );
}

export default function App() {
  return (
    <div className="relative flex h-[1080px] w-[1920px] flex-col overflow-hidden bg-[#f0f0f0] text-black">
      <Header />
      <Toolbars />
      <div className="flex h-[722px] shrink-0">
        <ProjectBar />
        <Workspace />
      </div>
      <DebugBar />
      <StatusBar />
      <Taskbar />
      <RecordDialog />
    </div>
  );
}
